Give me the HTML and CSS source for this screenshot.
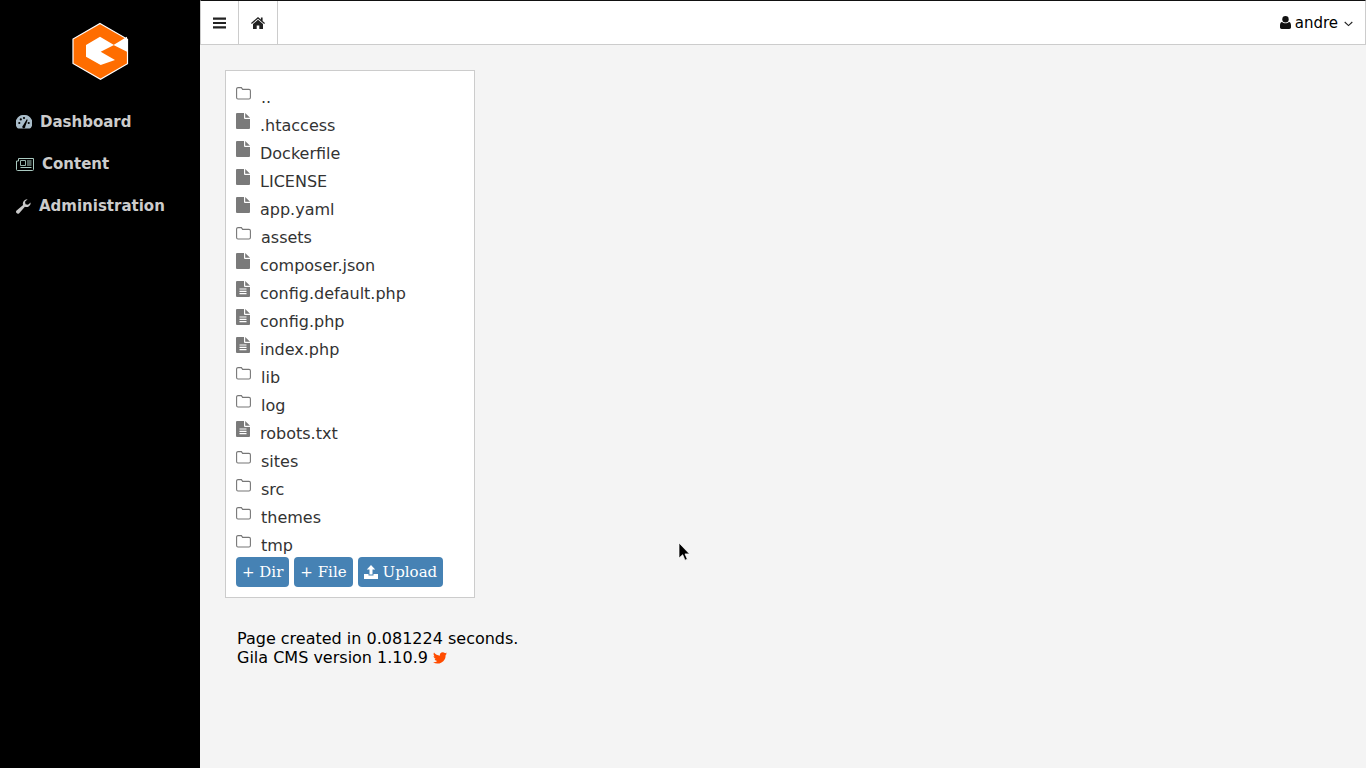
FILE: index.html
```html
<!DOCTYPE html>
<html>

<head>
    <title>Gila CMS - File Manager</title>
    <link rel="stylesheet" href="styles.css">
</head>

<body>
    <svg class="defs" width="0" height="0">
        <symbol id="i-folder" viewBox="0 0 15 13">
            <path d="M2 .6h3.400l1.200 1.800H13a1.400 1.400 0 0 1 1.400 1.400v6.800A1.400 1.400 0 0 1 13 12H2A1.400 1.400 0 0 1 .6 10.600V2A1.400 1.400 0 0 1 2 .6z" fill="none" stroke="currentColor" stroke-width="1.100" />
        </symbol>
        <symbol id="i-file" viewBox="0 0 14 16">
            <path d="M1 0h7v5a1 1 0 0 0 1 1h5v9a1 1 0 0 1-1 1H1a1 1 0 0 1-1-1V1a1 1 0 0 1 1-1z" fill="currentColor" />
            <path d="M9.200 0L14 4.800H9.200z" fill="currentColor" />
        </symbol>
        <symbol id="i-text" viewBox="0 0 14 16">
            <path d="M1 0h7v5a1 1 0 0 0 1 1h5v9a1 1 0 0 1-1 1H1a1 1 0 0 1-1-1V1a1 1 0 0 1 1-1z" fill="currentColor" />
            <path d="M9.200 0L14 4.800H9.200z" fill="currentColor" />
            <path d="M3.500 7.500h7v1.100h-7zM3.500 9.800h7v1.100h-7zM3.500 12.100h7v1.100h-7z" fill="#fff" />
        </symbol>
    </svg>

    <aside class="sidebar">
        <div class="logo">
            <svg width="60" height="60" viewBox="70 21 60 60">
                <path d="M100 23.500l27.500 15.800v24.400l-27 15.500-27.500-15.700V39z" fill="#ff6d00" stroke="#fff" stroke-width="1.200" />
                <path d="M86 45l14-8.300 14 8.300-13.300 6.700L115 60l-14.300 5L86 56.700z" fill="#fff" />
                <path d="M127 36.700L113.500 45l13.500 6.700z" fill="#fff" />
            </svg>
        </div>
        <nav class="side-menu">
            <a class="side-link" href="#">
                <svg class="side-icon" width="16" height="14" viewBox="0 0 16 14">
                    <path d="M8 0a8 8 0 0 0-6.900 12.700c.3.500.8.800 1.400.800h11c.6 0 1.100-.3 1.400-.8A8 8 0 0 0 8 0z" fill="#a9bcc9" />
                    <circle cx="3.300" cy="8" r="1.100" fill="#000" />
                    <circle cx="4.800" cy="4.400" r="1.100" fill="#000" />
                    <circle cx="8" cy="3" r="1.100" fill="#000" />
                    <circle cx="12.700" cy="8" r="1.100" fill="#000" />
                    <path d="M7 10.500L10.800 4.300l.9.400L9.300 11.500A1.500 1.500 0 1 1 7 10.500z" fill="#000" />
                </svg>
                <span>Dashboard</span>
            </a>
            <a class="side-link" href="#">
                <svg class="side-icon" width="18" height="13" viewBox="0 0 18 13">
                    <path d="M2.500.5h15v11a1 1 0 0 1-1 1h-15a1 1 0 0 1-1-1V3H2.500z" fill="none" stroke="#a9c9c0" />
                    <path d="M4.500 2.500h5v5h-5z" fill="none" stroke="#a9c9c0" stroke-width=".9" />
                    <path d="M11 2.500h4.500v1H11zM11 4.500h4.500v1H11zM11 6.500h4.500v1H11zM4.500 9h11v1h-11z" fill="#a9c9c0" />
                </svg>
                <span>Content</span>
            </a>
            <a class="side-link" href="#">
                <svg class="side-icon" width="15" height="15" viewBox="0 0 15 15">
                    <path d="M14.700 3.500a4.300 4.300 0 0 1-5.800 4.300L3.200 14.200a1.800 1.800 0 0 1-2.600-.1 1.800 1.800 0 0 1 0-2.500l6.500-5.600A4.300 4.300 0 0 1 11.600.3L9 2.800l.5 2.400 2.500.6z" fill="#c9c9c9" />
                </svg>
                <span>Administration</span>
            </a>
        </nav>
    </aside>

    <div class="main">
        <header class="topbar">
            <a class="top-btn top-btn--menu" href="#">
                <svg width="13" height="12" viewBox="0 0 13 12">
                    <path d="M0 .5h13v2.200H0zM0 4.900h13v2.200H0zM0 9.300h13v2.200H0z" fill="#222" />
                </svg>
            </a>
            <a class="top-btn" href="#">
                <svg width="14" height="12" viewBox="0 0 14 12">
                    <path d="M7 0L0 6l.8.900L7 1.700l6.200 5.200L14 6l-2.400-2V.6H9.900v2zM7 2.800L2 7v5h3.700V8.500h2.600V12H12V7z" fill="#222" />
                </svg>
            </a>
            <div class="user-menu">
                <svg class="user-icon" width="11" height="13" viewBox="0 0 11 13">
                    <circle cx="5.500" cy="3.300" r="3.200" fill="#111" />
                    <path d="M2 6c1 .9 2.200 1.300 3.500 1.300S8 6.900 9 6c1.300.2 2 1.500 2 3.500v1.800c0 .9-.7 1.700-1.700 1.700H1.700C.7 13 0 12.200 0 11.300V9.500C0 7.500.7 6.200 2 6z" fill="#111" />
                </svg>
                <span>andre</span>
                <svg class="caret" width="9" height="6" viewBox="0 0 9 6">
                    <path d="M.7 1l3.800 3.600L8.300 1" fill="none" stroke="#222" stroke-width="1.100" />
                </svg>
            </div>
        </header>

        <main class="content">
            <section class="panel">
                <ul class="file-list">
                    <li class="file-row file-row--dir"><svg class="file-icon file-icon--dir"><use href="#i-folder" /></svg><a href="#">..</a></li>
                    <li class="file-row"><svg class="file-icon"><use href="#i-file" /></svg><a href="#">.htaccess</a></li>
                    <li class="file-row"><svg class="file-icon"><use href="#i-file" /></svg><a href="#">Dockerfile</a></li>
                    <li class="file-row"><svg class="file-icon"><use href="#i-file" /></svg><a href="#">LICENSE</a></li>
                    <li class="file-row"><svg class="file-icon"><use href="#i-file" /></svg><a href="#">app.yaml</a></li>
                    <li class="file-row file-row--dir"><svg class="file-icon file-icon--dir"><use href="#i-folder" /></svg><a href="#">assets</a></li>
                    <li class="file-row"><svg class="file-icon"><use href="#i-file" /></svg><a href="#">composer.json</a></li>
                    <li class="file-row"><svg class="file-icon"><use href="#i-text" /></svg><a href="#">config.default.php</a></li>
                    <li class="file-row"><svg class="file-icon"><use href="#i-text" /></svg><a href="#">config.php</a></li>
                    <li class="file-row"><svg class="file-icon"><use href="#i-text" /></svg><a href="#">index.php</a></li>
                    <li class="file-row file-row--dir"><svg class="file-icon file-icon--dir"><use href="#i-folder" /></svg><a href="#">lib</a></li>
                    <li class="file-row file-row--dir"><svg class="file-icon file-icon--dir"><use href="#i-folder" /></svg><a href="#">log</a></li>
                    <li class="file-row"><svg class="file-icon"><use href="#i-text" /></svg><a href="#">robots.txt</a></li>
                    <li class="file-row file-row--dir"><svg class="file-icon file-icon--dir"><use href="#i-folder" /></svg><a href="#">sites</a></li>
                    <li class="file-row file-row--dir"><svg class="file-icon file-icon--dir"><use href="#i-folder" /></svg><a href="#">src</a></li>
                    <li class="file-row file-row--dir"><svg class="file-icon file-icon--dir"><use href="#i-folder" /></svg><a href="#">themes</a></li>
                    <li class="file-row file-row--dir"><svg class="file-icon file-icon--dir"><use href="#i-folder" /></svg><a href="#">tmp</a></li>
                </ul>
                <div class="actions">
                    <button class="btn">+ Dir</button>
                    <button class="btn">+ File</button>
                    <button class="btn">
                        <svg class="btn-icon" width="14" height="14" viewBox="0 0 14 14">
                            <path d="M7 0l4.200 4.500H8.500v5h-3v-5H2.800z" fill="#fff" />
                            <path d="M0 9h4.500v1.500h5V9H14v5H0z" fill="#fff" />
                        </svg>
                        Upload
                    </button>
                </div>
            </section>

            <footer class="page-info">
                <div>Page created in 0.081224 seconds.</div>
                <div>Gila CMS version 1.10.9
                    <svg class="twitter" width="14" height="12" viewBox="0 0 14 12">
                        <path d="M14 1.500c-.5.200-1 .400-1.600.500.600-.400 1-.900 1.200-1.600-.5.300-1.100.600-1.800.700A2.900 2.900 0 0 0 6.900 3.700C4.500 3.600 2.400 2.400 1 .6c-.8 1.300-.4 3 .9 3.900-.5 0-.9-.1-1.300-.4 0 1.400 1 2.600 2.300 2.900-.4.100-.9.100-1.300 0 .4 1.200 1.500 2 2.700 2A5.800 5.800 0 0 1 0 10.200 8.200 8.200 0 0 0 12.600 3c.6-.4 1-.9 1.400-1.500z" fill="#ff4c00" />
                    </svg>
                </div>
            </footer>
        </main>
    </div>

    <svg class="cursor" width="14" height="20" viewBox="0 0 14 20">
        <path d="M1 1v15l3.700-3.300 2.300 5.500 2.300-1-2.300-5.300H11.500z" fill="#000" stroke="#fff" stroke-width=".7" />
    </svg>
</body>

</html>
```

FILE: styles.css
```css
body {
    margin: 0;
    height: 100vh;
    display: flex;
    overflow: hidden;
    background-color: #f4f4f4;
    color: #000;
    font-family: "DejaVu Sans", sans-serif;
    font-size: 16px;
}

a {
    text-decoration: none;
}

.defs {
    position: absolute;
}

.sidebar {
    width: 200px;
    flex-shrink: 0;
    background-color: #000;
}

.logo {
    display: flex;
    justify-content: center;
    padding-top: 21px;
}

.logo svg {
    display: block;
}

.side-menu {
    display: flex;
    flex-direction: column;
    padding-top: 20px;
}

.side-link {
    display: flex;
    align-items: center;
    gap: 8px;
    height: 42px;
    padding-left: 16px;
    color: #ccc;
    font-size: 15px;
    font-weight: bold;
}

.main {
    flex: 1;
    min-width: 0;
}

.topbar {
    height: 43px;
    display: flex;
    background-color: #fff;
    border: 1px solid #ccc;
    border-top-color: #111;
}

.top-btn {
    width: 38px;
    display: flex;
    align-items: center;
    justify-content: center;
    border-right: 1px solid #ccc;
}

.top-btn--menu {
    width: 37px;
}

.user-menu {
    margin-left: auto;
    display: flex;
    align-items: center;
    gap: 5px;
    padding-right: 12px;
    font-size: 15px;
}

.user-menu span {
    margin-left: -1px;
    margin-right: 1px;
}

.caret {
    margin-top: 2px;
}

.content {
    padding: 25px 25px 0;
}

.panel {
    box-sizing: border-box;
    width: 250px;
    height: 528px;
    padding: 10px;
    background-color: #fff;
    border: 1px solid #ccc;
}

.file-list {
    list-style: none;
    margin: 0;
    padding: 0;
    height: 476px;
    overflow: hidden;
}

.file-row {
    height: 28px;
    display: flex;
    align-items: center;
    gap: 10px;
    padding-top: 4px;
    box-sizing: border-box;
}

.file-row a {
    color: #333;
}

.file-icon {
    width: 14px;
    height: 16px;
    color: #7a7a7a;
    margin-top: -9px;
}

.file-icon--dir {
    width: 15px;
    height: 13px;
    color: #777;
    margin-top: -8px;
}

.actions {
    display: flex;
    gap: 5px;
}

.btn {
    height: 30px;
    padding: 0 6px;
    display: flex;
    align-items: center;
    gap: 5px;
    background-color: #4682b4;
    color: #fff;
    border: none;
    border-radius: 4px;
    font-family: "DejaVu Serif", serif;
    font-size: 15px;
}

.page-info {
    padding: 31px 12px 0;
    line-height: 19px;
}

.twitter {
    vertical-align: -1px;
}

.cursor {
    position: absolute;
    left: 678px;
    top: 542px;
}
```
